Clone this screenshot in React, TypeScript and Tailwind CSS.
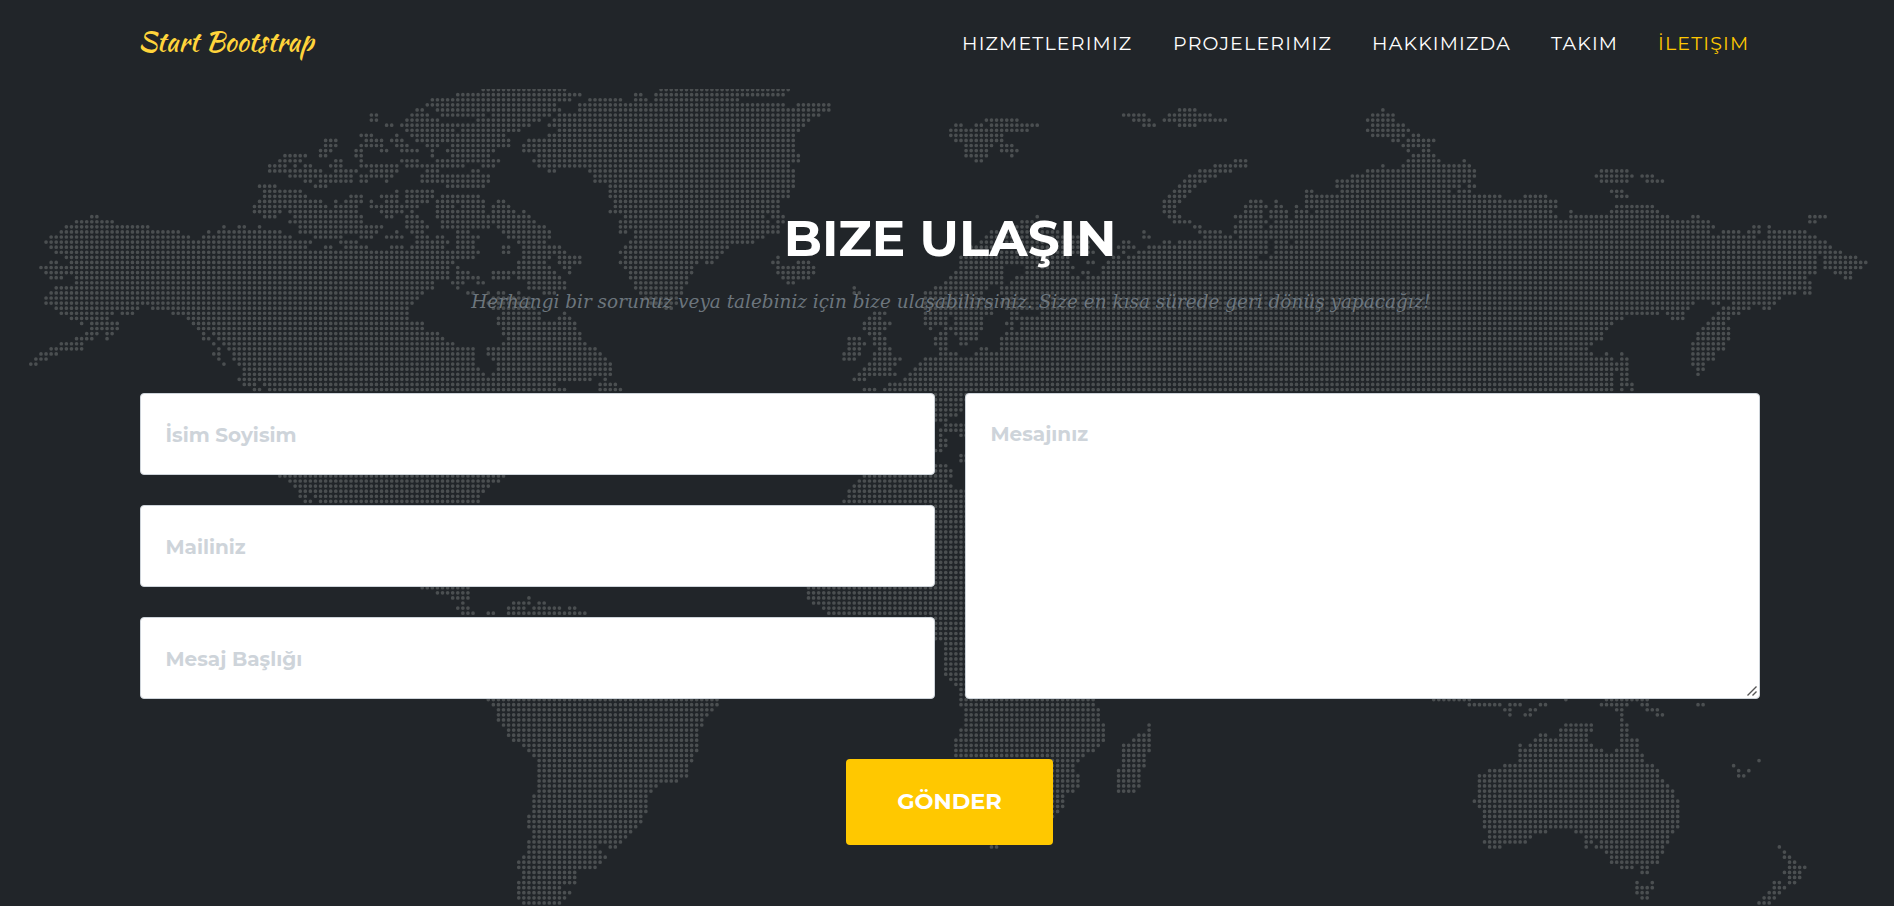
import React from "react";

type Tile = {
  /** Page x of the tile's left edge. */
  left: number;
  /** Tile units per pixel. */
  scale: number;
  firstRow: number;
  /** One entry per row of dots: "start-end" runs in tile units. */
  rows: string[];
};

const PITCH = 5.083;
const ORIGIN_X = 30.8;
const ORIGIN_Y = 89.6;
const HEADER_HEIGHT = 89;

const repeat = (run: string, times: number): string[] => Array.from({ length: times }, () => run);

const northAmerica: Tile = {
  left: 0,
  scale: 2.45,
  firstRow: 0,
  rows: [
    "1181-1385",
    "1120-1421",
    "1057-1397",
    "1045-1360",
    "1020-1035 1070-1372",
    "908-921 1008-1046 1083-1185 1207-1347",
    "908-921 996-1072 1170-1322",
    "946-959 984-1297",
    "996-1109 1134-1272",
    "883-909 971 1008-1109 1120-1235",
    "796-822 896-935 958-984 1020-1247",
    "796-822 883-935 971-998 1045-1072 1107-1247",
    "784-809 871-884 934-948 984-1022 1057 1095-1210",
    "696-748 784-797 871-884 1057 1107-1197",
    "684-735 821-834 884 984-1022 1070-1222",
    "659-698 721 746-760 809-834 884-973 996-1135 1183-1210",
    "659-785 821-873 908-973 1045-1072 1158-1172",
    "709-860 884-960 1032-1197",
    "746-760 784-860 884-897 946 1032-1197",
    "634-673 771-797 1095-1185",
    "646-735 971 996-1059",
    "646-748 859-884 934-973 996-1059 1083-1172",
    "634-785 821 846-884 908 946-973 996-1046 1070-1185 1220-1233",
    "621-797 821-873 908-1022 1070-1110 1134-1185 1207-1247",
    "621-685 709-873 934-985 1008 1070-1185 1207-1260 1283",
    "223-236 646-672 721-884 946-960 996-1022 1070-1297",
    "186-274 709-884 996-1035 1083-1310",
    "161-362 548 585-598 634 734-935 996-1046 1083-1197 1220-1335",
    "149-437 510 535-685 734-922 971 1008-1035 1120-1147 1232-1347",
    "124-462 497-710 771-836 884-910 946-985 1020-1046 1070-1084 1120-1172 1245-1347",
    "111-760 834-873 1020-1097 1120-1160 1270-1335",
    "124-748 796-810 846-898 958-985 1008-1084 1120-1160 1232-1245 1283-1372",
    "136-1172 1232-1245 1283-1385",
    "161-1160 1283-1347 1370-1421",
    "124-136 173-1110 1270-1335 1370-1421",
    "99-1097 1120 1270-1347 1383-1396",
    "111-1097 1120-1147 1207-1260 1270-1360 1396",
    "124-149 186-1097 1120-1172 1207-1245 1270-1372",
    "186-1060 1107-1135 1170-1184 1295-1385",
    "136-1060 1120 1295-1385",
    "124-1035 1147-1160 1195 1220-1235 1270 1333-1360",
    "111-1022 1207-1297",
    "111-1010 1195-1297",
    "136-340 371-1000 1207-1310",
    "149-274 298-325 421-1000 1232-1322 1383",
    "173-262 460-1000 1220-1322 1370-1396",
    "199 223-287 472-1035 1220-1409",
    "223-287 484-1035 1232-1409",
    "211-237 260-274 497 522-1072 1232-1421",
    "186-225 260 497-510 535-1084 1245-1421",
    "149-200 522 548-1110 1232-1434",
    "124-200 535 560-1160 1195-1459",
    "99-136 522-535 572-1160 1195-1471",
    "86-112 535 572-1160 1207-1484",
    "79-86 548 585-1160 1220-1496",
    "597-1172 1220-1496",
    "597-1185 1207-1496",
    "585-1447 1484",
    "597-623 646-1360 1470-1508",
    "621-634 659-1385 1470-1520",
  ],
};

const greenlandAndBritain: Tile = {
  left: 480,
  scale: 2.45,
  firstRow: 0,
  rows: [
    "441-755",
    "380-393 429-745",
    "268-345 380-407 429-633",
    "243-745 778-857",
    "243-857",
    "192-832",
    "180-807",
    "168-795",
    "192-782",
    "168-770",
    "118-770",
    "106-770",
    "106-770",
    "143-782",
    "130-782",
    "143-757",
    "168-181 268-770",
    "280-770",
    "280-770",
    "318-770",
    "318-757",
    "318-757",
    "330-732",
    "330-732",
    "318-732",
    "355-695 720-745",
    "343-707 732-745",
    "343-735",
    "343-358 380-732",
    "380-695",
    "368-670",
    "355-607",
    "343-595",
    "355-582 730",
    "343-530 555-570 718-732 780-807",
    "355-520 730-820",
    "368-520 730-820",
    "368-507 742-807",
    "380-507 755-768",
    "380-492 917",
    "393-492 917-930",
    "405-480",
    "418-480",
    "455-468",
    "967-993",
    "955-980",
    "942-1005",
    "942-993",
    "955-980",
    "903-930 967-993",
    "903-942 967-993",
    "903-930 980-1005",
    "892-930 967-1005",
    "892-918 967-1030",
    "955-1018",
    "942-1005",
    "930-1018",
    "918-942 1040",
    "1002-1040",
    "942-968 990-1040",
  ],
};

const westernEurasia: Tile = {
  left: 900,
  scale: 3,
  firstRow: 4,
  rows: [
    "838-888",
    "670-735 808-933",
    "257-352 700-750 792-980",
    "167-185 228-246 273-413 732-765 838-888",
    "152-385",
    "152-305",
    "167-305",
    "197-275 304-337",
    "197-262 304-352",
    "197-262 335",
    "228-245 1006-1040",
    "945-1040",
    "899-992",
    "868-948",
    "853-917",
    "838-887",
    "823-872",
    "808-857",
    "792-841 1052-1085 1128",
    "792-826 1036-1098 1128-1145 1190",
    "792-826 1036-1085 1113-1160 1190-1200",
    "411 808-841 1006-1085 1113-1160 1190-1200",
    "365-395 823-872 1021-1098 1128-1200",
    "350-430 884-902 1006-1085 1113-1200",
    "273-470 732 899-963 1006-1200",
    "257-540 732-748 914-992 1021-1098 1113-1145 1159-1200",
    "243-560 670-688 792-811 838-1098 1128-1160 1190-1200",
    "213-570 655-703 747-1098 1128-1200",
    "200-580 670 716-1098 1128-1200",
    "190-500 640-657 686-1075 1113-1200",
    "182-505 563-581 625-1200",
    "182-310 380-520 609-1200",
    "167-310 380-505 548-565 609-1200",
    "152-310 350-535 563-1200",
    "137-300 335-1200",
    "106-260 304-1200",
    "75-245 304-1200",
    "75-245 319-1200",
    "75-275 304-1200",
    "75-275 319-1200",
    "75-275 335-350 426-1200",
    "75-142 167-245 335-1200",
    "75-142 167-245 319-335 365-1200",
    "90 137-245 335 365-1200",
    "121-137 167-230 319-1200",
    "106-137 182-230 304-1200",
    "106-137 182-200 304-1200",
    "121-137 243-262 304-1200",
    "121-170 228-1200",
    "75-1200",
    "60-1200",
    "45-1200",
    "30-1200",
    "14-1200",
    "0-1200",
    "0-1200",
  ],
};

const easternEurasia: Tile = {
  left: 1300,
  scale: 2.64,
  firstRow: 4,
  rows: [
    "219",
    "192-247",
    "178-247",
    "192-274",
    "178-287",
    "192-274 300-314",
    "246-260 287-354",
    "273-341",
    "287 327-341",
    "300-354",
    "287-367 434",
    "219 273-448",
    "178-461 795-865",
    "138-461 783-878 903-932",
    "98-448 795-865 917-959",
    "98-421 448-461",
    "17-31 112-395 421-448 823-852",
    "17-530 595-650 836-865",
    "17-677",
    "17-677 836-932",
    "4-17 44-663 716 823-945",
    "0-677 716-972 1038-1052 1345-1387",
    "0-1079 1345-1358",
    "0-1092 1199-1212 1239",
    "0-1079 1118-1160 1185-1212 1239-1334",
    "0-1200 1239-1360",
    "0-1387",
    "0-1401",
    "0-1427",
    "0-1360 1387-1468",
    "0-1360 1387-1494",
    "0-1360 1387-1481",
    "0-1360 1414-1454",
    "0-1334 1441-1454",
    "0-1347",
    "0-1347",
    "0-1306 1333-1347",
    "0-1266",
    "0-1038 1092-1105 1145-1252",
    "0-1025 1118-1186 1226-1239",
    "0-945 972-1012 1105-1160",
    "0-852 985-1012 1092-1132",
    "0-825 1079-1120",
    "0-812 1065-1132",
    "0-798 1052-1132",
    "0-798 1052-1132",
    "0-771 1038-1120",
    "0-758 1038-1120",
    "0-771 811 850 1038-1092",
    "0-825 850-863 1038-1092",
    "0-825 838-863 1038-1065",
    "0-825 838-863 1052-1065",
    "0-825 850-863 1052",
    "0-825 850-863",
    "0-825 850-878",
    "0-825 850 878",
  ],
};

const centralEurope: Tile = {
  left: 925,
  scale: 3,
  firstRow: 60,
  rows: [
    "32-120",
    "32-120",
    "32-108",
    "32-108",
    "32-95",
    "32-65",
    "62-120",
    "47-120",
    "47 108-120",
    "47-62",
    "47-62",
    "32-47",
    "108-120",
    "108-120",
    "32-62",
    "32-78",
    "17-78",
    "2-65",
    "2-78",
    ...repeat("2-120", 30),
    ...repeat("62-120", 7),
    "78-120",
    "93-120",
    "108-120",
    "108-120",
  ],
};

const mexicoAndSahara: Tile = {
  left: 240,
  scale: 2.063,
  firstRow: 76,
  rows: [
    "82-545 1288-1465",
    "102-535 1277-1455",
    "112-514 1267-1465",
    "123-503 1256-1440",
    "123-134 155-493 1256-1440",
    "134-145 165-493 1246-1440",
  ],
};

const caribbean: Tile = {
  left: 240,
  scale: 2.063,
  firstRow: 98,
  rows: [
    "375-470 1172-1440",
    "407-470 1172-1440",
    "438-470 595 1172-1440",
    "459 563-597 616-628 1183-1440",
    "449-470 553-586 605-660 679-691 1204-1440",
    "459-481 512-523 553-712 1214-1440",
  ],
};

const southAmerica: Tile = {
  left: 240,
  scale: 2.063,
  firstRow: 120,
  rows: [
    "512-985",
    "522-985",
    "532-975",
    "532-965",
    "532-955",
    "543-950",
    "553-943",
    "553-943",
    "563-943",
    "585-943",
    "595-943",
    "605-933",
    "616-933",
    "616-922",
    "616-922",
    "616-922",
    "616-902",
    "616-860",
    "616-850",
    ...repeat("605-838", 4),
    "595-828",
    "595-828",
    "595-817",
    "605-807",
    "605-797",
    "595-786",
    "595-734 763-775",
    "595-744",
    "585-755",
    "574-744",
    "574-734",
    "585-691",
    "585-691",
    "574-691",
    "574-660",
    "574-680",
    "574-670",
    "585-660",
  ],
};

const southernAfricaAndOceania: Tile = {
  left: 900,
  scale: 1.577,
  firstRow: 120,
  rows: [
    "97-305 842-898 1050 1115-1180",
    "97-305 898-948 963-978 1010-1018 1107-1147 1171-1179 1260-1268",
    "104-314 955-962 995-1002 1131-1139 1179-1195",
    "104-314 962 987-995 1139 1196-1203",
    "104-314 1139",
    "104-321 392 1050-1091 1139-1147",
    "97-321 392 1042-1091 1139-1147",
    "97-321 377-392 1010-1018 1042-1083 1139-1147",
    "88-321 369-392 1002-1083 1139-1163",
    "88-314 353-392 978 995-1091 1139-1163",
    "88-305 353-392 978-1107 1131-1163",
    "88-290 353-385 978-1171",
    "240-282 353-385 978-1171 1355",
    "240-274 353-385 955-1187 1315",
    "240-274 345-377 930-1195 1323 1339",
    "240-282 345-377 914-1195 1323-1331",
    "240-282 345-377 914-1203",
    "240-282 345-377 914-1211",
    "240-274 345-369 914-1219",
    "240-258 914-1219",
    "240-258 906-1227",
    "240-258 914-1227",
    "240-250 922-1227",
    "240 922-1227",
    "922-1227",
    "922-1227",
    "930-1018 1067-1219",
    "930-995 1083-1211",
    "922-987 1083-1091 1107-1211",
    "145-153 930-947 1083 1099-1203 1388",
    "1115-1203 1396",
    "1123-1195 1396-1404",
    "1123-1195 1404-1412",
    "1139-1155 1171-1179 1404-1428",
    "1171-1179 1396-1420",
    "1404-1420",
    "1163 1187 1380-1388 1404-1412",
    "1163-1187 1380-1396",
    "1163-1179 1372-1388",
    "1171-1179 1364-1380",
    "1355-1372",
  ],
};

const tiles: Tile[] = [
  northAmerica,
  greenlandAndBritain,
  westernEurasia,
  easternEurasia,
  centralEurope,
  mexicoAndSahara,
  caribbean,
  southAmerica,
  southernAfricaAndOceania,
];

/** Collects every run as grid columns, so that neighbouring tiles merge without doubled dots. */
function buildMapPath(): string {
  const grid = new Map<number, Set<number>>();
  for (const tile of tiles) {
    tile.rows.forEach((runs, index) => {
      const row = tile.firstRow + index;
      const columns = grid.get(row) ?? new Set<number>();
      for (const run of runs.split(" ")) {
        const [start, end = start] = run.split("-").map(Number);
        const toColumn = (value: number) => Math.round((tile.left + value / tile.scale - ORIGIN_X) / PITCH);
        for (let column = toColumn(start); column <= toColumn(end); column++) columns.add(column);
      }
      grid.set(row, columns);
    });
  }
  let path = "";
  grid.forEach((columns, row) => {
    const y = (ORIGIN_Y + row * PITCH - HEADER_HEIGHT).toFixed(2);
    columns.forEach((column) => {
      path += `M${(ORIGIN_X + column * PITCH).toFixed(2)} ${y}h.01`;
    });
  });
  return path;
}

const mapPath = buildMapPath();

const links = [
  { label: "HIZMETLERIMIZ", box: "w-[170px]" },
  { label: "PROJELERIMIZ", box: "w-[158px]" },
  { label: "HAKKIMIZDA", box: "w-[138px]" },
  { label: "TAKIM", box: "w-[66px]" },
  { label: "İLETIŞIM", box: "w-[90px]", active: true },
];

const fieldClass =
  "block w-full rounded-[4px] border border-[#ced4da] bg-white px-[24.5px] font-['Montserrat','Inter',sans-serif] text-[20px] font-bold text-[#212529] outline-none placeholder:text-[#ced4da] placeholder:opacity-100";

export default function App() {
  return (
    <div className="flex h-[906px] w-full flex-col overflow-hidden bg-[#212529] font-['Montserrat','Inter',sans-serif]">
      <header className="flex h-[89px] shrink-0 items-center justify-between pr-[146px] pl-[138px]">
        <a
          href="#top"
          className="pb-[6px] font-['Kaushan_Script','Lato',cursive] text-[27px] leading-none whitespace-nowrap text-[#ffd43b]"
        >
          Start Bootstrap
        </a>
        <nav className="flex gap-[41px] pb-px text-[19px] leading-6 font-normal tracking-[1.1875px]">
          {links.map((link) => (
            <a
              key={link.label}
              href="#section"
              className={`${link.box} whitespace-nowrap ${link.active ? "text-[#ffc800]" : "text-white"}`}
            >
              {link.label}
            </a>
          ))}
        </nav>
      </header>

      <main className="relative flex-1">
        <svg
          className="pointer-events-none absolute inset-0"
          width="1894"
          height="817"
          viewBox="0 0 1894 817"
          aria-hidden="true"
        >
          <path d={mapPath} fill="none" stroke="#4b4f51" strokeWidth="3.7" strokeLinecap="round" />
        </svg>

        <div className="relative pr-[134px] pl-[140px]">
          <div className="flex flex-col items-center pt-[120px]">
            <h2 className="text-[50px] leading-[60px] font-bold whitespace-nowrap text-white">BIZE ULAŞIN</h2>
            <h3 className="mt-[18px] pl-[2px] font-['Roboto_Slab','DejaVu_Serif',serif] text-[18.43px] leading-[30px] whitespace-nowrap text-[#6c757d] italic">
              Herhangi bir sorunuz veya talebiniz için bize ulaşabilirsiniz. Size en kısa sürede geri dönüş yapacağız!
            </h3>
          </div>

          <form className="mt-[76px]" onSubmit={(event) => event.preventDefault()}>
            <div className="grid grid-cols-2 gap-[30px]">
              <div className="flex flex-col gap-[30px]">
                <input className={`${fieldClass} h-[82px] pt-[2px]`} type="text" placeholder="İsim Soyisim" />
                <input className={`${fieldClass} h-[82px] pt-[2px]`} type="email" placeholder="Mailiniz" />
                <input className={`${fieldClass} h-[82px] pt-[2px]`} type="text" placeholder="Mesaj Başlığı" />
              </div>
              <div className="relative">
                <textarea
                  className={`${fieldClass} h-[306px] resize-none py-[25px] leading-[30px]`}
                  placeholder="Mesajınız"
                />
                <svg
                  className="pointer-events-none absolute right-[2px] bottom-[2px]"
                  width="12"
                  height="12"
                  viewBox="0 0 12 12"
                  aria-hidden="true"
                >
                  <path d="M1.5 10.5l9-9M6.5 10.5l4-4" fill="none" stroke="#555" strokeWidth="1.4" />
                </svg>
              </div>
            </div>
            <div className="mt-[60px] flex justify-center pr-[2px]">
              <button
                type="submit"
                className="h-[86px] w-[207px] rounded-[4px] bg-[#ffc800] pl-px text-[22.5px] font-bold text-white"
              >
                GÖNDER
              </button>
            </div>
          </form>
        </div>
      </main>
    </div>
  );
}
